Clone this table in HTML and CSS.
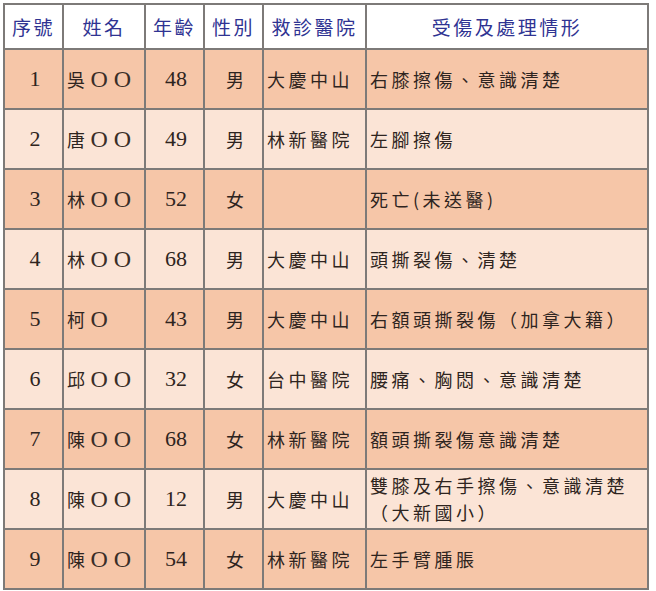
FILE: index.html
```html
<!DOCTYPE html>
<html lang="zh-Hant">
<head>
<meta charset="utf-8">
<link rel="stylesheet" href="styles.css">
</head>
<body>
<div class="wrap">
<table class="casualty">
  <colgroup>
    <col class="c-no"><col class="c-name"><col class="c-age"><col class="c-sex"><col class="c-hosp"><col class="c-desc">
  </colgroup>
  <thead>
    <tr class="head">
      <th>序號</th><th>姓名</th><th>年齡</th><th>性別</th><th>救診醫院</th><th>受傷及處理情形</th>
    </tr>
  </thead>
  <tbody>
    <tr class="dark"><td class="num">1</td><td class="txt">吳<span class="oo">OO</span></td><td class="num">48</td><td class="mid">男</td><td class="txt">大慶中山</td><td class="txt">右膝擦傷、意識清楚</td></tr>
    <tr class="light"><td class="num">2</td><td class="txt">唐<span class="oo">OO</span></td><td class="num">49</td><td class="mid">男</td><td class="txt">林新醫院</td><td class="txt">左腳擦傷</td></tr>
    <tr class="dark"><td class="num">3</td><td class="txt">林<span class="oo">OO</span></td><td class="num">52</td><td class="mid">女</td><td class="txt"></td><td class="txt">死亡(未送醫)</td></tr>
    <tr class="light"><td class="num">4</td><td class="txt">林<span class="oo">OO</span></td><td class="num">68</td><td class="mid">男</td><td class="txt">大慶中山</td><td class="txt">頭撕裂傷、清楚</td></tr>
    <tr class="dark"><td class="num">5</td><td class="txt">柯<span class="oo">O</span></td><td class="num">43</td><td class="mid">男</td><td class="txt">大慶中山</td><td class="txt">右額頭撕裂傷（加拿大籍）</td></tr>
    <tr class="light"><td class="num">6</td><td class="txt">邱<span class="oo">OO</span></td><td class="num">32</td><td class="mid">女</td><td class="txt">台中醫院</td><td class="txt">腰痛、胸悶、意識清楚</td></tr>
    <tr class="dark"><td class="num">7</td><td class="txt">陳<span class="oo">OO</span></td><td class="num">68</td><td class="mid">女</td><td class="txt">林新醫院</td><td class="txt">額頭撕裂傷意識清楚</td></tr>
    <tr class="light"><td class="num">8</td><td class="txt">陳<span class="oo">OO</span></td><td class="num">12</td><td class="mid">男</td><td class="txt">大慶中山</td><td class="txt">雙膝及右手擦傷、意識清楚<br>（大新國小）</td></tr>
    <tr class="dark"><td class="num">9</td><td class="txt">陳<span class="oo">OO</span></td><td class="num">54</td><td class="mid">女</td><td class="txt">林新醫院</td><td class="txt">左手臂腫脹</td></tr>
  </tbody>
</table>
</div>
</body>
</html>
```
FILE: styles.css
```css
html, body {
  margin: 0;
  padding: 0;
  background: #ffffff;
}
.wrap {
  padding: 3px 0 0 3px;
}
.casualty {
  border-collapse: collapse;
  table-layout: fixed;
  width: 646px;
  border: 2px solid #7d7a78;
  font-family: "Noto Sans CJK TC", "Noto Sans CJK SC", sans-serif;
  color: #2e2420;
}
.c-no { width: 59px; }
.c-name { width: 82px; }
.c-age { width: 59px; }
.c-sex { width: 59px; }
.c-hosp { width: 103px; }
.c-desc { width: 282px; }
.casualty th,
.casualty td {
  border: 2px solid #7d7a78;
  padding: 0 0 0 3px;
  vertical-align: middle;
  white-space: nowrap;
  overflow: hidden;
}
.head {
  height: 45px;
  background: #ffffff;
}
.head th {
  font-weight: 400;
  font-size: 19px;
  letter-spacing: 2.5px;
  color: #2f3392;
  text-align: center;
  padding: 0;
}
.dark { background: #f6c6a8; height: 60px; }
.light { background: #fbe4d6; height: 60px; }
.num {
  font-family: "Liberation Serif", serif;
  font-size: 22px;
  text-align: center;
  padding: 0;
}
.mid {
  font-size: 18px;
  text-align: center;
  padding: 0;
}
.txt {
  font-size: 18px;
  letter-spacing: 3.5px;
  line-height: 27px;
  text-align: left;
}
.oo {
  font-family: "Liberation Serif", serif;
  font-size: 24px;
  letter-spacing: 6px;
  margin-left: 2px;
  color: #3a2e28;
}
```
